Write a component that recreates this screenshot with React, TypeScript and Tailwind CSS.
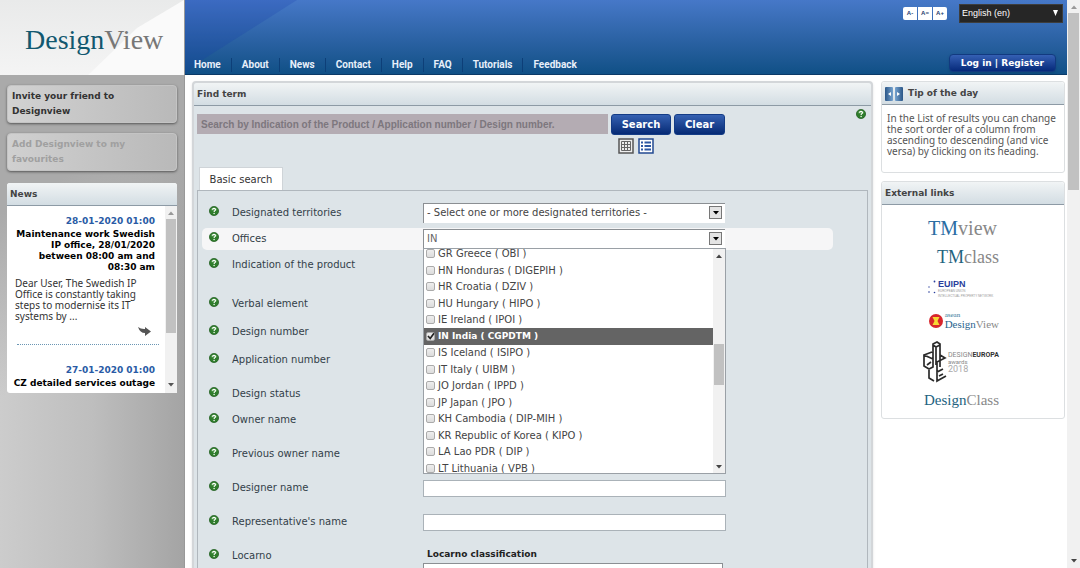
import React, { useState } from 'react';
import clsx from 'clsx';

const navItems = ['Home', 'About', 'News', 'Contact', 'Help', 'FAQ', 'Tutorials', 'Feedback'];

const offices = [
  'GR Greece ( OBI )',
  'HN Honduras ( DIGEPIH )',
  'HR Croatia ( DZIV )',
  'HU Hungary ( HIPO )',
  'IE Ireland ( IPOI )',
  'IN India ( CGPDTM )',
  'IS Iceland ( ISIPO )',
  'IT Italy ( UIBM )',
  'JO Jordan ( IPPD )',
  'JP Japan ( JPO )',
  'KH Cambodia ( DIP-MIH )',
  'KR Republic of Korea ( KIPO )',
  'LA Lao PDR ( DIP )',
  'LT Lithuania ( VPB )',
];

const textFields = [
  { id: 'indication', label: 'Indication of the product', row: 'h-[39px]' },
  { id: 'verbal', label: 'Verbal element', row: 'h-[28px]' },
  { id: 'design-number', label: 'Design number', row: 'h-[28px]' },
  { id: 'application-number', label: 'Application number', row: 'h-[34px]' },
  { id: 'design-status', label: 'Design status', row: 'h-[26px]' },
  { id: 'owner', label: 'Owner name', row: 'h-[34px]' },
  { id: 'previous-owner', label: 'Previous owner name', row: 'h-[34px]' },
  { id: 'designer', label: 'Designer name', row: 'h-[34px]' },
  { id: 'representative', label: "Representative's name", row: 'h-[34px]' },
];

const HelpIcon = () => (
  <svg viewBox="0 0 10 10" className="size-[10px] shrink-0" aria-hidden="true">
    <circle cx="5" cy="5" r="4.6" fill="#2f7d2c" stroke="#1c5a1b" strokeWidth="0.7" />
    <path d="M1.5 4a3.7 3.2 0 0 1 7 0Q5 5.4 1.5 4z" fill="#7ab873" opacity="0.6" />
    <path d="M3.5 3.8Q3.6 2.4 5 2.4T6.5 3.7C6.5 4.7 5.1 4.7 5.1 5.9" fill="none" stroke="#fff" strokeWidth="1.1" />
    <circle cx="5.1" cy="7.5" r="0.7" fill="#fff" />
  </svg>
);

const Triangle = ({ up = false, className }: { up?: boolean; className?: string }) => (
  <svg viewBox="0 0 6 4" className={clsx('h-[4px] w-[6px]', className)} aria-hidden="true">
    <path d={up ? 'M0 4L3 0.5L6 4z' : 'M0 0L3 3.5L6 0z'} fill="currentColor" />
  </svg>
);

const ArrowBox = () => (
  <span className="pointer-events-none absolute right-[3px] top-[3px] flex h-[13px] w-[13px] items-center justify-center border border-[#777] bg-[#e4e4e4] text-black">
    <Triangle />
  </span>
);

const PanelTitle = ({ children }: { children: React.ReactNode }) => (
  <h2 className="flex h-[23px] items-center gap-[5px] rounded-t-[3px] border-b border-[#8d9aa5] bg-linear-to-b from-[#f1f4f5] to-[#d3dde3] px-[3px] pt-[2px] text-[9px] font-bold text-[#444]">
    {children}
  </h2>
);

const Header = () => (
  <header className="relative flex h-[75px] shrink-0 border-b border-[#0b3a68] bg-linear-to-b from-[#4678c8] to-[#0f5086]">
    <svg viewBox="0 0 112 74" className="absolute left-0 top-0 h-[74px] w-[112px]" aria-hidden="true">
      <path d="M0 0H112L14 62L0 74z" fill="#1238a8" opacity="0.2" />
    </svg>
    <nav className="relative flex flex-1 items-end pb-[2px] pl-[9px]">
      {navItems.map((item) => (
        <a
          key={item}
          href="#"
          className="mr-[10px] border-r border-[#0d3f78] pr-[10px] font-['Roboto'] text-[10px] font-bold leading-[14px] text-[#e8effa] last:border-transparent"
        >
          {item}
        </a>
      ))}
    </nav>
    <div className="flex flex-col items-end justify-between pb-[2px] pr-[4px] pt-[4px]">
      <div className="flex items-center gap-[12px]">
        <div className="flex gap-px">
          {['-', '=', '+'].map((sign) => (
            <button
              key={sign}
              aria-label={`Text size ${sign}`}
              className="h-[13px] w-[14px] bg-white font-['Liberation_Sans'] text-[6px] font-bold leading-[13px] text-[#24406e] first:rounded-l-[2px] last:rounded-r-[2px]"
            >
              A{sign}
            </button>
          ))}
        </div>
        <div className="relative">
          <select
            aria-label="Language"
            className="block h-[19px] w-[104px] appearance-none border border-[#3d3d3d] bg-[#262626] px-[2px] font-['Liberation_Sans'] text-[9px] text-white"
          >
            <option>English (en)</option>
          </select>
          <svg viewBox="0 0 5 6" className="pointer-events-none absolute right-[5px] top-[6px] h-[6px] w-[5px]" aria-hidden="true">
            <path d="M0 0H5L2.5 6z" fill="#fff" />
          </svg>
        </div>
      </div>
      <button className="mr-[7px] h-[18px] rounded-[4px] border border-[#123a80] bg-linear-to-b from-[#3560b4] to-[#06297a] px-[11px] text-[9px] font-bold leading-[14px] text-white shadow">
        Log in | Register
      </button>
    </div>
  </header>
);

const Sidebar = () => (
  <aside className="w-[185px] shrink-0 border-r border-[#999] bg-[#bbb]">
    <div className="relative h-[75px] bg-linear-to-b from-[#e9eaea] to-[#f4f4f4]">
      <svg viewBox="0 0 184 75" className="absolute left-0 top-0 h-[75px] w-[184px]" aria-hidden="true">
        <path d="M184 0L137 28L88 75H184z" fill="#fafafa" />
      </svg>
      <a href="#" className="absolute left-[25px] top-[24px] font-['Liberation_Serif'] text-[28px] leading-[32px] text-[#777]">
        <span className="text-[#12586f]">Design</span>View
      </a>
    </div>
    <div className="flex flex-col gap-[10px] bg-[linear-gradient(150deg,#aaaaaa_0px,#aaaaaa_120px,transparent_280px),linear-gradient(90deg,#cccccc_0%,#bebebe_50%,#a4a4a4_100%)] px-[7px] pb-[600px] pt-[10px] text-[9px]">
      <a href="#" className="block h-[38px] rounded-[4px] border border-[#c4c4c4] bg-linear-to-r from-[#d2d2d2] to-[#b9b9b9] px-1 py-[3px] font-bold leading-[15px] text-[#333] shadow-sm shadow-black/40">
        Invite your friend to
        <br />
        Designview
      </a>
      <a href="#" className="block h-[38px] rounded-[4px] border border-[#c4c4c4] bg-linear-to-r from-[#d0d0d0] to-[#b9b9b9] px-1 py-[3px] font-bold leading-[15px] text-[#a0a0a0] shadow-sm shadow-black/40">
        Add Designview to my
        <br />
        favourites
      </a>
      <section className="mt-[2px] rounded-[3px] bg-white">
        <PanelTitle>News</PanelTitle>
        <div className="flex h-[187px]">
          <div className="min-w-0 flex-1 overflow-hidden pl-[8px] pr-[10px] pt-[7px] leading-[11px] text-[#333]">
            <p className="text-right font-bold leading-[16px] text-[#2a5ba5]">28-01-2020 01:00</p>
            <p className="-ml-[4px] text-right font-bold text-black">Maintenance work Swedish IP office, 28/01/2020 between 08:00 am and 08:30 am</p>
            <p className="mt-[5px] font-['Noto_Sans'] text-[10px] leading-[11px]">Dear User, The Swedish IP Office is constantly taking steps to modernise its IT systems by ...</p>
            <a href="#" aria-label="Read more" className="mt-[3px] flex justify-end pr-[4px]">
              <svg viewBox="0 0 14 12" className="h-[12px] w-[14px]" aria-hidden="true">
                <path d="M1 2Q4 4.300 8 4V2L14 6.500L8 11V8Q3 8 1 2z" fill="#555" />
              </svg>
            </a>
            <div className="-mr-[4px] ml-[2px] mt-[7px] border-b border-dotted border-[#6b96b3]" />
            <p className="mt-[17px] text-right font-bold leading-[16px] text-[#2a5ba5]">27-01-2020 01:00</p>
            <p className="-ml-[4px] whitespace-nowrap text-right font-bold leading-[11px] text-black">CZ detailed services outage</p>
          </div>
          <div className="flex w-[12px] shrink-0 flex-col items-center bg-[#f1f1f1] pt-[5px] text-[#555]">
            <Triangle up className="text-[#999]" />
            <div className="mt-[4px] h-[114px] w-[10px] bg-[#c1c1c1]" />
            <Triangle className="mb-[6px] mt-auto" />
          </div>
        </div>
      </section>
    </div>
  </aside>
);

const Row = ({ id, label, row, active, children }: { id: string; label: string; row: string; active?: boolean; children?: React.ReactNode }) => (
  <div className={clsx('shrink-0', row)}>
    <div className={clsx('flex h-[22px] rounded-[5px] pl-[7px]', active && 'bg-[#f6f6f7]')}>
      <div className="flex w-[214px] shrink-0 items-start gap-[13px] pt-[4px]">
        <HelpIcon />
        <label htmlFor={id} className="leading-[14px]">{label}</label>
      </div>
      <div className="w-[303px]">{children}</div>
    </div>
  </div>
);

const OfficeList = ({ checked, toggle }: { checked: string[]; toggle: (name: string) => void }) => (
  <div className="absolute left-0 top-[19px] z-10 flex h-[226px] w-[303px] border border-[#9aa0a6] bg-white">
    <div className="flex flex-1 items-center overflow-hidden">
      <ul className="grid h-[231px] w-full shrink-0 grid-rows-14">
        {offices.map((name) => {
          const on = checked.includes(name);
          return (
            <li key={name} className={clsx('min-h-0', on ? 'bg-[#646464] text-[9px] font-bold text-white' : 'text-[#444]')}>
              <label className="flex h-full items-center gap-[3px] pl-[2px]">
                <input type="checkbox" className="peer sr-only" checked={on} onChange={() => toggle(name)} />
                <span className="flex size-[9px] items-center justify-center rounded-[2px] border border-[#aaa] bg-linear-to-b from-[#eee] to-[#dcdcdc]">
                  {on && (
                    <svg viewBox="0 0 8 8" className="size-[8px] shrink-0" aria-hidden="true">
                      <path d="M1 4L3.200 6.500L7 1.200" fill="none" stroke="#222" strokeWidth="1.7" />
                    </svg>
                  )}
                </span>
                {name}
              </label>
            </li>
          );
        })}
      </ul>
    </div>
    <div className="flex w-[12px] flex-col items-center bg-[#f1f1f1] pt-[5px] text-[#444]">
      <Triangle up />
      <div className="mt-[86px] h-[41px] w-[10px] bg-[#c1c1c1]" />
      <Triangle className="mb-[4px] mt-auto" />
    </div>
  </div>
);

const SearchPanel = () => {
  const [checked, setChecked] = useState(['IN India ( CGPDTM )']);
  const toggle = (name: string) =>
    setChecked((prev) => (prev.includes(name) ? prev.filter((n) => n !== name) : [...prev, name]));

  return (
    <section className="flex-1 rounded-t-[4px] border-2 border-[#d3d6d9] bg-[#dde4e8] shadow-sm">
      <PanelTitle>Find term</PanelTitle>
      <div className="px-[3px] pt-[8px]">
        <div className="flex items-start gap-[3px]">
          <input
            aria-label="Search"
            placeholder="Search by Indication of the Product / Application number / Design number."
            className="h-[20px] w-[411px] bg-[#b4acb3] px-[4px] font-['Liberation_Sans'] text-[10px] font-bold placeholder:text-[#7d777e]"
          />
          <button className="h-[21px] w-[60px] rounded-[3px] border border-[#143c86] bg-linear-to-b from-[#3561b2] to-[#062a75] text-[10px] font-bold text-white">
            Search
          </button>
          <button className="h-[21px] w-[51px] rounded-[3px] border border-[#143c86] bg-linear-to-b from-[#3561b2] to-[#062a75] text-[10px] font-bold text-white">
            Clear
          </button>
          <button aria-label="Help" className="-mt-[5px] ml-auto mr-[2px]">
            <HelpIcon />
          </button>
        </div>
        <div className="flex gap-[4px] pl-[421px] pt-[3px]">
          <button aria-label="Grid view">
            <svg viewBox="0 0 16 16" className="size-[16px]" aria-hidden="true">
              <path d="M1 1H15V15H1z" fill="#eee" stroke="#555" strokeWidth="1.500" />
              <path d="M3.500 3.500H12.500V12.500H3.500zM6.500 3.500V12.500M9.500 3.500V12.500M3.500 6.500H12.500M3.500 9.500H12.500" fill="none" stroke="#666" />
            </svg>
          </button>
          <button aria-label="List view">
            <svg viewBox="0 0 16 16" className="size-[16px]" aria-hidden="true">
              <path d="M1 1H15V15H1z" fill="#fff" stroke="#234a91" strokeWidth="1.500" />
              <path d="M3 4.500H5M3 8H5M3 11.500H5M6.500 4.500H13M6.500 8H13M6.500 11.500H13" stroke="#2d57a2" strokeWidth="1.800" />
            </svg>
          </button>
        </div>
        <div className="mt-[13px] flex pl-[2px]">
          <button className="h-[23px] w-[84px] border border-b-0 border-[#cfd4d8] bg-white text-[10px] text-[#333]">Basic search</button>
        </div>
        <form className="flex flex-col border border-[#b0b7bd] pb-10 pl-[4px] pr-[34px] pt-[11px] text-[10px] text-[#333f48]">
          <Row id="territories" label="Designated territories" row="h-[26px]">
            <div className="relative mt-px w-[302px]">
              <select id="territories" className="block h-[20px] w-full appearance-none border border-b-0 border-r-0 border-[#8b8f93] bg-white px-[3px] pb-[2px] text-[10px] text-[#444]">
                <option>- Select one or more designated territories -</option>
              </select>
              <ArrowBox />
            </div>
          </Row>
          <Row id="offices" label="Offices" row="h-[26px]" active>
            <div className="relative mt-px w-[302px]">
              <input id="offices" defaultValue="IN" className="block h-[20px] w-full border border-b-0 border-r-0 border-[#8b8f93] bg-white px-[3px] pb-[2px] text-[10px] text-[#666]" />
              <ArrowBox />
              <OfficeList checked={checked} toggle={toggle} />
            </div>
          </Row>
          {textFields.map(({ id, label, row }) => (
            <Row key={id} id={id} label={label} row={row}>
              <input id={id} className="mt-[3px] block h-[17px] w-full border border-[#aab2b8] bg-white px-[3px]" />
            </Row>
          ))}
          <Row id="locarno" label="Locarno" row="h-[60px]">
            <p className="pl-[4px] text-[9px] font-bold leading-[18px] text-[#222]">Locarno classification</p>
            <input id="locarno" className="block h-[20px] w-[300px] border border-[#8b8f93] bg-white" />
          </Row>
        </form>
      </div>
    </section>
  );
};

const EuropaMark = () => (
  <svg viewBox="0 0 24 42" className="h-[42px] w-[24px] shrink-0" fill="none" stroke="#2b2b2b" strokeWidth="1.700" aria-hidden="true">
    <path d="M10 24V3L14 1L17 3V26M10 4L13 6V24M13 6L17 4M1 14V25L6 28L10 26V18L1 14L9 11M4 24L8 21M17 14L22 17L14 21V31L20 28M6 29V37L11 40M14 31V40L23 35M16 35L20 33" />
  </svg>
);

const RightColumn = () => (
  <aside className="flex w-[184px] shrink-0 flex-col gap-[8px]">
    <section className="h-[92px] rounded-[3px] border border-[#dcdfe1]">
      <PanelTitle>
        <span className="flex gap-[2px]">
          <button aria-label="Previous tip" className="flex h-[14px] w-[8px] items-center justify-center rounded-[1px] bg-linear-to-r from-[#2b5788] to-[#76a3cf]">
            <svg viewBox="0 0 4 4" className="size-[4px]"><path d="M4 0L1 2L4 4z" fill="#fff" /></svg>
          </button>
          <button aria-label="Next tip" className="flex h-[14px] w-[8px] items-center justify-center rounded-[1px] bg-linear-to-r from-[#76a3cf] to-[#2b5788]">
            <svg viewBox="0 0 4 4" className="size-[4px]"><path d="M0 0L3 2L0 4z" fill="#fff" /></svg>
          </button>
        </span>
        Tip of the day
      </PanelTitle>
      <p className="px-[5px] pt-[8px] font-['Noto_Sans'] text-[10px] leading-[11px] text-[#555]">
        In the List of results you can change the sort order of a column from ascending to descending (and vice versa) by clicking on its heading.
      </p>
    </section>
    <section className="h-[238px] rounded-[3px] border border-[#dcdfe1]">
      <PanelTitle>External links</PanelTitle>
      <div className="flex w-[117px] flex-col items-end font-['Liberation_Serif'] text-[#888]">
        <a href="#" className="mt-[9px] pr-[2px] text-[20px] leading-[29px]"><span className="text-[#2b6da3]">TM</span>view</a>
        <a href="#" className="text-[18px] leading-[29px]"><span className="text-[#1f6480]">TM</span>class</a>
        <a href="#" className="mt-[8px] flex gap-[2px]">
          <svg viewBox="0 0 8 14" className="h-[14px] w-[8px]" fill="#2b3f9c" aria-hidden="true">
            <circle cx="6.500" cy="1.500" r="0.900" /><circle cx="1" cy="7" r="0.700" /><circle cx="1" cy="12" r="0.800" /><circle cx="6.500" cy="12.500" r="0.800" />
          </svg>
          <span className="block w-[61px] whitespace-nowrap font-['Liberation_Sans'] text-[3px] leading-[5px] text-[#999]">
            <span className="block text-[9px] font-bold leading-[9px] text-[#2b3f9c]">EUIPN</span>
            EUROPEAN UNION
            <br />
            INTELLECTUAL PROPERTY NETWORK
          </span>
        </a>
        <a href="#" className="mt-[13px] flex items-center gap-[2px]">
          <svg viewBox="0 0 14 14" className="size-[14px]" aria-hidden="true">
            <circle cx="7" cy="7" r="7" fill="#d8262c" />
            <path d="M3.500 3H10.500L8.500 7L10.500 11H3.500L5.500 7z" fill="#f7d935" />
          </svg>
          <span className="flex flex-col text-[11px] leading-[11px]">
            <span className="text-[7px] leading-[7px] text-[#2f7698]">asean</span>
            <span><span className="text-[#2a6590]">Design</span>View</span>
          </span>
        </a>
        <a href="#" className="mt-[11px] flex items-center gap-[1px] font-['Roboto'] text-[7px] leading-[8px]">
          <EuropaMark />
          <span className="block w-[51px] whitespace-nowrap">
            DESIGN<b className="text-[#333]">EUROPA</b>
            <span className="block text-[6px] leading-[6px]">awards</span>
            <span className="block text-[9px] leading-[9px] text-[#aaa]">2018</span>
          </span>
        </a>
        <a href="#" className="mt-[6px] text-[15px] leading-[22px]"><span className="text-[#24637f]">Design</span>Class</a>
      </div>
    </section>
  </aside>
);

const App = () => (
  <div className="flex h-screen overflow-hidden bg-white font-['DejaVu_Sans',sans-serif]">
    <Sidebar />
    <div className="flex min-w-0 flex-1 flex-col">
      <Header />
      <main className="flex items-start gap-[8px] pb-10 pl-[7px] pr-[2px] pt-[6px]">
        <SearchPanel />
        <RightColumn />
      </main>
    </div>
    <div className="flex w-[13px] shrink-0 flex-col items-center bg-[#f1f1f1] pt-[5px] text-[#444]">
      <Triangle up className="text-[#999]" />
      <div className="mt-[4px] h-[177px] w-[11px] bg-[#c1c1c1]" />
      <Triangle className="mb-[5px] mt-auto" />
    </div>
  </div>
);

export default App;
